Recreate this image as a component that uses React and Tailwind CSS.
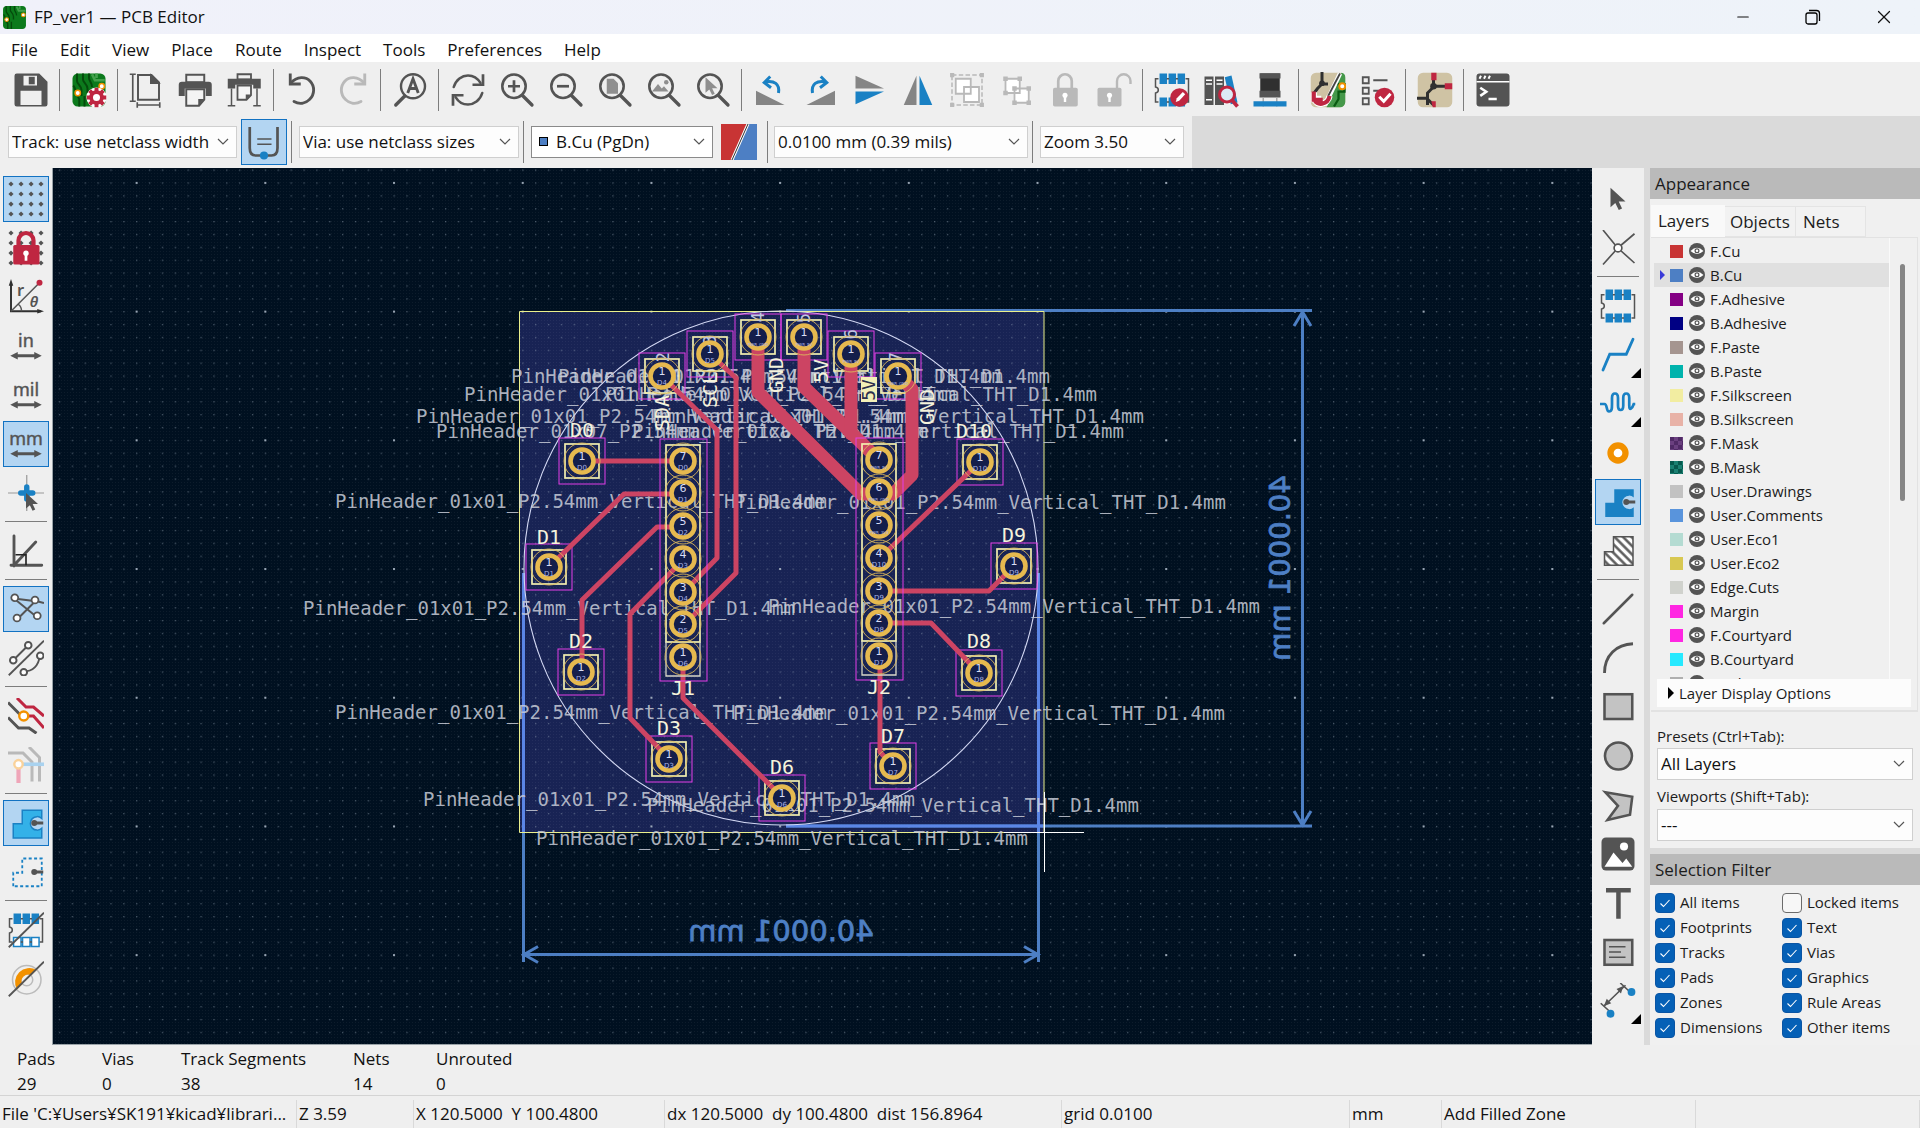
import React from "react";
import { Minus, X } from "lucide-react";

const D = "#545454";
const B = "#1a81c4";
const R = "#bf2641";
const G = "#b9b9b9";
const O = "#f29100";

function Svg({ children, size = 36 }) {
  return (
    <svg width={size} height={size} viewBox="0 0 24 24" fill="none" aria-hidden="true" className="shrink-0">
      {children}
    </svg>
  );
}

/* ---------- shared icon parts ---------- */

function BoardArt() {
  return (
    <>
      <rect x="1" y="1" width="22" height="22" rx="3.500" fill="#0c7a1c" />
      <path d="M4 1v5c0 2 3 3 3 6v4M8 1v4c0 2 3 3 3 6v3M12 1v3c0 2 2 3 2 6M1.500 9c2 2 1.500 6 4 9v5M9 16v7" stroke="#054a0c" strokeWidth="1.300" />
      <path d="M14 1.500l2 4h6.500M17 1v3" stroke="#43a04c" strokeWidth="1.800" />
      <circle cx="4.500" cy="14" r="1.800" fill="#fff" stroke={O} strokeWidth="1" />
      <circle cx="20.500" cy="9.500" r="1.800" fill="#fff" stroke={O} strokeWidth="1" />
    </>
  );
}

function Lens({ children }) {
  return (
    <Svg>
      <circle cx="10" cy="9.500" r="7.800" stroke={D} strokeWidth="1.700" />
      <path d="M15.500 15.500L22 22" stroke={D} strokeWidth="2.200" strokeLinecap="round" />
      {children}
    </Svg>
  );
}

function Chip({ filled = true }) {
  return (
    <>
      <path d="M3 4.500H1v5.500c2.500.5 2.500 3.500 0 4v6H3M21 4.500h2v15.500H21" stroke={D} strokeWidth="1" />
      {[4, 10, 16].map((x) => (
        <g key={x}>
          <rect x={x - 0.3} y="1" width="5" height="7" fill={B} />
          <rect x={x - 0.3} y="17" width="5" height="6" fill={filled ? B : "#fff"} stroke={filled ? "none" : B} />
        </g>
      ))}
      <path d="M8.500 4.500h1.500M14.500 4.500H16M8.500 20h1.500M14.500 20H16" stroke={D} />
    </>
  );
}

function ZoneShape({ fill = B, stroke = "none" }) {
  return (
    <>
      <path d="M3.500 22V12.500H9.500V3.500H22.500v5.500a4.500 4.500 0 1 0 0 6.500V22z" fill={fill} stroke={stroke} />
      <circle cx="17.500" cy="12" r="2" fill={D} />
      <path d="M18 12h5.500" stroke={D} strokeWidth="2" />
    </>
  );
}

function Unit({ label }) {
  return (
    <Svg>
      <text x="12" y="12.500" textAnchor="middle" fontFamily="Noto Sans" fontSize="12" fill={D} stroke={D} strokeWidth="0.300">
        {label}
      </text>
      <path d="M4 18.500h16" stroke={D} strokeWidth="2" />
      <path d="M1.500 18.500l5-2.500v5zM22.500 18.500l-5-2.500v5z" fill={D} />
    </Svg>
  );
}

const CURSOR = "M0 0v13l3.200-2.800 2.300 4.600 2.200-1-2.200-4.600H10z";

/* ---------- top toolbar ---------- */

const top = [
  ["Save", <Svg><path d="M2.500 1h15L23 6.500v15a1.500 1.500 0 0 1-1.500 1.500h-19A1.500 1.500 0 0 1 1 21.500v-19A1.500 1.500 0 0 1 2.500 1z" fill={D} /><path d="M7 2.500h9v6.500H7z" fill="#efefef" /><path d="M10.500 3.200h4v5h-4z" fill={D} /><path d="M5 12.500h14V22H5z" fill="#efefef" /></Svg>],
  null,
  ["Board setup", <Svg><BoardArt /><g transform="translate(17 17)"><circle r="4" stroke="#fff" strokeWidth="5.500" /><path d="M0-6.500v13M-6.500 0h13M-4.600-4.600l9.200 9.200M4.600-4.600l-9.200 9.200" stroke={R} strokeWidth="2.600" /><circle r="3.600" fill="#fff" stroke={R} strokeWidth="2.500" /><circle r="1.200" fill="#fff" /></g></Svg>],
  null,
  ["Page settings", <Svg><path d="M6 2h9l5 5v11.500H6z" stroke={D} strokeWidth="1.300" /><path d="M14.500 2v5.500H20z" fill={D} stroke={D} /><path d="M2.500 1.500v18M.5 1.500h4M.5 19.500h4M5.500 22h15M5.500 20.200v3.600M20.500 20.200v3.600" stroke={D} strokeWidth="1.100" /></Svg>],
  ["Print", <Svg><path d="M5.500 1.800h12v5H5.500z" stroke={D} strokeWidth="1.300" /><path d="M2.500 6.500h18a2 2 0 0 1 2 2V16h-4v-5H4.500v5H.5V8.500a2 2 0 0 1 2-2z" fill={D} /><path d="M5.500 11.500h12v7l-3.500 4H5.500z" stroke={D} strokeWidth="1.300" fill="#f4f4f4" /><path d="M17.500 18l-4 4.500V18z" fill={D} /></Svg>],
  ["Plot", <Svg><path d="M7 1.500h9V5H7z" stroke={D} strokeWidth="1.200" /><path d="M.5 4.500h22v6.500h-5V8.500H5.500V11h-5z" fill={D} /><path d="M7 9h9v6.500l-3 3H7z" stroke={D} strokeWidth="1.200" fill="#f4f4f4" /><path d="M16 15l-3.500 3.500V15z" fill={D} /><path d="M3 11v11.500M.5 22.500h5M20 11v11.500M17.500 22.500h5" stroke={D} strokeWidth="1" /></Svg>],
  null,
  ["Undo", <Svg><path d="M3.500 1v7h7" stroke={D} strokeWidth="1.900" /><path d="M3.800 7.500C8 2.500 14 3 16.800 6.200c3.200 3.500 3 8.600-.3 12-3 3-7 3.500-10.500 1.500" stroke={D} strokeWidth="1.900" strokeLinecap="round" /></Svg>],
  ["Redo", <Svg><path d="M20.500 1v7h-7" stroke={G} strokeWidth="1.900" /><path d="M20.200 7.500C16 2.500 10 3 7.200 6.200c-3.200 3.500-3 8.600.3 12 3 3 7 3.500 10.500 1.500" stroke={G} strokeWidth="1.900" strokeLinecap="round" /></Svg>],
  null,
  ["Find", <Svg><circle cx="14" cy="9.500" r="8" stroke={D} strokeWidth="1.600" /><path d="M8.500 16L2.500 22" stroke={D} strokeWidth="2.200" strokeLinecap="round" /><path d="M10.500 14l3.500-9.500L17.500 14M11.500 11h5" stroke={D} strokeWidth="1.900" /></Svg>],
  null,
  ["Refresh", <Svg><path d="M2.500 10C4 5 8 2.300 12 2.300c3.500 0 6.500 2 8.300 5M21.500 14c-1.500 5-5.500 7.700-9.500 7.700-3.500 0-6.500-2-8.300-5" stroke={D} strokeWidth="1.700" strokeLinecap="round" /><path d="M22 1.500V8.500H15M2 22.500V15.500H9" stroke={D} strokeWidth="1.800" /></Svg>],
  ["Zoom in", <Lens><path d="M10 5.500v8M6 9.500h8" stroke={D} strokeWidth="1.800" /></Lens>],
  ["Zoom out", <Lens><path d="M6 9.500h8" stroke={D} strokeWidth="1.800" /></Lens>],
  ["Zoom to fit", <Lens><path d="M6.500 4.500h4.500l3 3v7H6.500z" fill="#8f8f8f" /></Lens>],
  ["Zoom to objects", <Lens><path d="M4 13l4-5 2.500 3 1.500-1.500 3 3.500z" fill="#8f8f8f" /><circle cx="13.500" cy="6.800" r="1.500" fill="#8f8f8f" /></Lens>],
  ["Zoom to selection", <Lens><path transform="translate(7 3.500) scale(.8)" d={CURSOR} fill="#8f8f8f" /></Lens>],
  null,
  ["Rotate counterclockwise", <Svg><path d="M2 12.500V22h19z" fill="#858585" /><path d="M17 14c1-6-3-8.500-8.500-7.500" stroke={B} strokeWidth="2" /><path d="M11.500 3L7.500 7l4.500 3.500" stroke={B} strokeWidth="2" /></Svg>],
  ["Rotate clockwise", <Svg><path d="M22 12.500V22H3z" fill="#858585" /><path d="M7 14C6 8 10 5.500 15.500 6.500" stroke={B} strokeWidth="2" /><path d="M12.500 3l4 4-4.500 3.500" stroke={B} strokeWidth="2" /></Svg>],
  ["Flip vertically", <Svg><path d="M3 2.500v8.500h19z" fill="#858585" /><path d="M3 21.500V13h19z" fill={B} /></Svg>],
  ["Mirror horizontally", <Svg><path d="M2.500 22H11V2.500z" fill="#858585" /><path d="M21.500 22H13V2.500z" fill={B} /></Svg>],
  ["Group", <Svg><path d="M2 2h20v20H2z" stroke={G} strokeDasharray="3 1.500" /><path d="M4.500 4.500h10v10h-10zM10 10h10v10H10z" fill="#fff" stroke={G} strokeWidth="1.200" /><path d="M.7.700h2.800v2.800H.7zM20.500.7h2.800v2.800h-2.800zM.7 20.500h2.800v2.800H.7zM20.500 20.500h2.800v2.800h-2.800z" fill={G} /></Svg>],
  ["Ungroup", <Svg><path d="M5 4.500h9.500v9.500H5zM11 11h9.500v9.500H11z" fill="#fff" stroke={G} strokeWidth="1.200" /><path d="M3.500 3h3v3h-3zM13 3h3v3h-3zM3.500 12.500h3v3h-3zM19 9.500h3v3h-3zM9.500 9.500h3v3h-3zM9.500 19h3v3h-3zM19 19h3v3h-3z" fill={G} /></Svg>],
  ["Lock", <Svg><path d="M7.500 11V6a4.500 4.500 0 0 1 9 0v5" stroke={G} strokeWidth="1.800" /><rect x="4" y="10.500" width="16.500" height="12.500" rx="1.200" fill={G} /><circle cx="12" cy="15.500" r="1.700" fill="#fff" /><path d="M12 16v4" stroke="#fff" strokeWidth="1.600" /></Svg>],
  ["Unlock", <Svg><path d="M14 11V6a4.500 4.500 0 0 1 9 0v2" stroke={G} strokeWidth="1.600" /><rect x="1" y="10.500" width="16" height="12.500" rx="1.200" fill={G} /><circle cx="9" cy="15.500" r="1.700" fill="#fff" /><path d="M9 16v4" stroke="#fff" strokeWidth="1.600" /></Svg>],
  null,
  ["Footprint editor", <Svg><Chip /><circle cx="17" cy="17" r="6.200" fill={R} /><path d="M14.500 20l.7-2.500 4-4.200 1.600 1.600-4 4.200z" fill="#fff" /></Svg>],
  ["Footprint library browser", <Svg><path d="M1 3h6v19H1zM8 3h6v19H8z" fill={D} /><path d="M14.500 3.500l4.500-1.200 4 18-4.500 1.200z" fill={B} /><path d="M2 5.500h4M2 8h4M2 18.500h4M9 5.500h4M9 8h4" stroke="#fff" strokeWidth=".9" /><circle cx="16" cy="15" r="5" fill="#dcebf5" stroke={R} strokeWidth="2" /><path d="M19.500 19l3.500 4" stroke={R} strokeWidth="2.500" /></Svg>],
  ["3D viewer", <Svg><path d="M5.500 1h13v12h-13z" fill="#303030" /><path d="M5 .8h14v3.500H5zM5 12.500h14v4.500H5z" fill="#555" /><path d="M7.500 17v6M16.500 17v6" stroke="#aaa" /><path d="M1 19.500h22V23H1z" fill={B} /></Svg>],
  null,
  ["Update PCB from schematic", <Svg><rect x=".5" y=".5" width="23" height="23" rx="3.500" fill="#cfc3a4" /><path d="M21 .5a3 3 0 0 1 2.500 3V20a3.500 3.500 0 0 1-3.500 3.500h-9z" fill="#45984a" /><path d="M17 8h6v5h-4v5l-3 5" stroke="#0a5a12" strokeWidth="1.500" /><path d="M8 0v8l-3 3-3 4M8 8h4" stroke="#303030" strokeWidth="2" /><circle cx="8" cy="7.500" r="1.900" fill="#303030" /><path d="M20 1L10 22" stroke="#fff" strokeWidth="3" /><path d="M20 1L10 20" stroke="#444" strokeWidth="1.200" /><circle cx="21.500" cy="9.500" r="2" fill="#fff" stroke={O} strokeWidth="1.300" /><path d="M2.500 13.500v4.500h5M3 18c1 5 9 4 10-2" stroke="#fff" strokeWidth="4.200" /><path d="M2.500 13v5.500h6M3 18c1 5 9 4 10-2" stroke={R} strokeWidth="2.800" /></Svg>],
  ["Design rules checker", <Svg><path d="M2.500 3.500h4v4h-4zM2.500 10.500h4v4h-4zM2.500 17.500h4v4h-4zM9.500 5.500H19M9.500 12.500H14" stroke={D} strokeWidth="1.200" /><circle cx="17" cy="17" r="6.500" fill={R} /><path d="M13.500 16.500l3 3 4.500-5" stroke="#fff" strokeWidth="2" /></Svg>],
  null,
  ["Switch to schematic", <Svg><rect x=".5" y=".5" width="23" height="23" rx="3.500" fill="#cfc3a4" /><path d="M11 4v6l-4 4v8M0 17.500h7M11 9.500h8M7 18l4 4" stroke="#303030" strokeWidth="2" /><circle cx="11" cy="9.500" r="2.200" fill="#303030" /><path d="M9.500.5h3.500v5H9.500zM18.500 7.500h5v4h-5zM9.500 19.500h3v4h-2z" fill={R} /></Svg>],
  null,
  ["Scripting console", <Svg><rect x="1" y="1" width="22" height="22" rx="2" fill={D} /><path d="M1 6.500h22" stroke="#fff" strokeWidth="1" /><path d="M3 4.500l1-2M6 4.500l1-2M9 4.500l1-2" stroke="#fff" strokeWidth="1.300" /><path d="M3.500 10.500l4 2.700-4 2.700M9 18h5.500" stroke="#fff" strokeWidth="1.700" /></Svg>],
];

/* ---------- side toolbars ---------- */

const dots = [];
[2, 8.7, 15.4, 22].forEach((x) => [2, 8.7, 15.4, 22].forEach((y) => dots.push([x, y])));
const Dot = ({ x, y }) => <path d={`M${x - 1.7} ${y}l1.700-1.700 1.700 1.700-1.700 1.700z`} fill={D} />;

const left = [
  ["Show grid", <Svg>{dots.map(([x, y]) => <Dot key={x + "-" + y} x={x} y={y} />)}</Svg>, true],
  ["Grid overrides", <Svg>{dots.map(([x, y]) => <Dot key={x + "-" + y} x={x} y={y} />)}<path d="M7 12V7a5 5 0 0 1 10 0v5" stroke={R} strokeWidth="2.800" /><rect x="3.500" y="10" width="17.500" height="13" rx="1" fill={R} /><circle cx="12" cy="15.500" r="1.800" fill="#fff" /><path d="M12 16v4.500" stroke="#fff" strokeWidth="1.800" /></Svg>],
  ["Polar coordinates", <Svg><path d="M2 3v18.500h20" stroke="#303030" strokeWidth="1.300" /><path d="M2 0L.5 4.500h3zM24 21.500L19.500 20v3z" fill="#303030" /><path d="M2 21.500L20.500 3M7 17c1.500 1 2 2.500 2 4.500" stroke={D} /><circle cx="21" cy="2.500" r="2" fill={R} /><text x="6" y="11" fontFamily="Noto Sans" fontSize="11" fontWeight="600" fill={D}>r</text><text x="14.500" y="18.500" fontFamily="Noto Sans" fontSize="10" fontStyle="italic" fontWeight="600" fill={D}>θ</text></Svg>],
  ["Inches", <Unit label="in" />],
  ["Mils", <Unit label="mil" />],
  ["Millimeters", <Unit label="mm" />, true],
  ["Full-window crosshair", <Svg><path d="M0 12h24M12.500 0v24" stroke="#999" strokeWidth=".8" /><path d="M12.500 8v8M8.500 12h8" stroke={B} strokeWidth="3.600" strokeLinecap="round" /><path transform="translate(12 12) scale(.8)" d={CURSOR} fill={D} /></Svg>],
  null,
  ["Limit to 45 degrees", <Svg><path d="M4 2v20M2 21.500h20.500M4 21.500L18.500 6" stroke={D} strokeWidth="1.900" strokeLinecap="round" /><path d="M5 14.500h7v7" stroke="#222" strokeWidth="1.100" /></Svg>],
  null,
  ["Show ratsnest", <Svg><path d="M4 5L20 18M20 5L6 19M4 5l16 2 4 1" stroke={D} strokeWidth="1.300" /><g fill="#fff" stroke={D} strokeWidth="1.200"><circle cx="4.500" cy="4.500" r="2.300" /><circle cx="18" cy="6" r="2.300" /><circle cx="6" cy="18" r="2.300" /><circle cx="19.500" cy="16.500" r="2.300" /></g></Svg>, true],
  ["Curved ratsnest", <Svg><path d="M24 .5L.5 23.500" stroke={D} strokeWidth="1.200" /><path d="M3.500 13.500l10-10M10.500 21c6 0 10-4 10.500-10" stroke={D} strokeWidth="1.300" /><g fill="#fff" stroke={D} strokeWidth="1.300"><circle cx="3.500" cy="13.500" r="2.200" /><circle cx="13.500" cy="3.500" r="2.200" /><circle cx="21.500" cy="10.500" r="2.200" /><circle cx="10.500" cy="21.500" r="2.200" /></g></Svg>],
  null,
  ["Net colors", <Svg><path d="M0 3l8 8M0 13l7 7h7l5 3.500" stroke={D} strokeWidth="2" /><path d="M6 0l6 6h5l7 6M13 12h4l7 8" stroke={R} strokeWidth="2" /><circle cx="10.500" cy="12" r="3" fill="#fff" stroke={O} strokeWidth="1.600" /></Svg>],
  ["High contrast", <Svg><path d="M0 4h10l6 6v13M14 0l7 7v16" stroke={G} strokeWidth="2" /><path d="M10 11.500h14" stroke="#a9d2ef" strokeWidth="2.400" /><path d="M7 14v10" stroke="#efa5b8" strokeWidth="2.800" /><circle cx="7" cy="11.500" r="2.800" fill="#fff" stroke="#fad29a" strokeWidth="1.600" /></Svg>],
  null,
  ["Draw zone fills", <Svg><ZoneShape fill="#33b1e8" stroke={B} /></Svg>, true],
  ["Draw zone outlines", <Svg><path d="M3.500 21.500V12.500H9.500V3H22.500V21.500z" stroke={B} strokeWidth="1.200" strokeDasharray="2 1.600" /><circle cx="17.500" cy="12" r="2" fill={D} /><path d="M18 12h5.500" stroke={D} strokeWidth="2" /></Svg>],
  null,
  ["Sketch footprints", <Svg><Chip filled={false} /><path d="M24 .5L.5 23.500" stroke={D} strokeWidth="1.200" /></Svg>],
  ["Sketch pads", <Svg><circle cx="12.500" cy="12.500" r="9.500" stroke="#bbb" /><circle cx="12.500" cy="12.500" r="4" stroke="#bbb" /><path d="M6 19A9.500 9.500 0 0 1 19 6l-3.500 3.500a4.500 4.500 0 0 0-6 6z" fill={O} /><path d="M24 .5L.5 23.500" stroke={D} strokeWidth="1.200" /></Svg>],
];

const right = [
  ["Select", <Svg><path transform="translate(7 4.500)" d={CURSOR} fill={D} /></Svg>],
  ["Local ratsnest", <Svg><path d="M2 0l9 11M23 2.500L13 11M2 23l9-10M23 22l-10-9" stroke={D} strokeWidth="1.100" /><circle cx="12" cy="12" r="2.600" stroke={D} strokeWidth="1.100" fill="#fff" /></Svg>],
  null,
  ["Place footprint", <Svg><Chip /></Svg>],
  ["Route track", <Svg><path d="M2 22L6.500 11.500H17.500L22 1.500" stroke={B} strokeWidth="1.900" strokeLinecap="round" /></Svg>, false, true],
  ["Tune length", <Svg><path d="M0 12h3c2 0 1 5 3 5s2-2 2-5V8c0-4 4-4 4 0v5c0 4 3.500 4 3.500 0V8c0-4 4-4 4 0v5c0 4 2 2 3-1h1" stroke={B} strokeWidth="1.800" /></Svg>, false, true],
  ["Add via", <Svg><circle cx="12" cy="12" r="5" stroke={O} strokeWidth="4.200" fill="#fff" /></Svg>],
  ["Add filled zone", <Svg><ZoneShape /></Svg>, true],
  ["Add rule area", <Svg><defs><pattern id="hatch" width="4" height="4" patternUnits="userSpaceOnUse" patternTransform="rotate(-45)"><path d="M1 0v4" stroke={D} strokeWidth="1.600" /></pattern></defs><path d="M3 21.500V12.500H9V2.500H22V21.500z" fill="#fff" /><path d="M3 21.500V12.500H9V2.500H22V21.500z" fill="url(#hatch)" stroke={D} /></Svg>],
  null,
  ["Draw line", <Svg><path d="M2.500 21.500l19-19" stroke={D} strokeWidth="1.700" strokeLinecap="round" /></Svg>],
  ["Draw arc", <Svg><path d="M3 22C3 10 11 3 22 2.500" stroke={D} strokeWidth="1.900" /></Svg>],
  ["Draw rectangle", <Svg><rect x="3" y="3.500" width="18.500" height="16.500" fill="#c3c3c3" stroke={D} strokeWidth="1.700" /></Svg>],
  ["Draw circle", <Svg><circle cx="12.300" cy="12" r="9" fill="#c3c3c3" stroke={D} strokeWidth="1.700" /></Svg>],
  ["Draw polygon", <Svg><path d="M3.500 3.500l18 3-1.500 12-15 3.500 7-9.500z" fill="#c3c3c3" stroke={D} strokeWidth="1.700" /></Svg>],
  ["Add image", <Svg><rect x="1" y="1" width="22" height="22" rx="3" fill={D} /><circle cx="16" cy="7" r="2.700" fill="#fff" /><path d="M3 20.500l6-9.500 6 7 2.500-3 4 5.500z" fill="#fff" /></Svg>],
  ["Add text", <Svg><path d="M4 3.500h16.500M12.300 3.500V22.500" stroke={D} strokeWidth="3" /></Svg>],
  ["Add text box", <Svg><rect x="3" y="4" width="18.500" height="16.500" fill="#c3c3c3" stroke={D} strokeWidth="1.700" /><path d="M6 8.500h11M6 12h8M6 15.500h11" stroke={D} strokeWidth="1.100" /></Svg>],
  ["Add dimension", <Svg><path d="M3 15L17 1.500M13.500 0l6 5.500M.5 13.500l6 5.500" stroke={D} strokeWidth="1.100" /><path d="M2.500 15.500l2-5 3 3zM15.500 2l-1.500 5-3-3z" fill={D} /><circle cx="21" cy="6" r="2.600" fill={B} /><circle cx="7" cy="20.500" r="2.600" fill={B} /></Svg>, false, true],
];

function SideBar({ items, label }) {
  return (
    <div role="toolbar" aria-label={label} className="flex shrink-0 flex-col items-center bg-[#efefef] px-[3px] pt-[6px]">
      {items.map((it, i) =>
        it ? (
          <div key={it[0]} className="flex h-[49px] items-center">
            <button
              aria-label={it[0]}
              className={
                it[2]
                  ? "relative flex h-[46px] w-[46px] items-center justify-center border border-[#1272c2] bg-[#b3d5f2]"
                  : "relative flex h-[46px] w-[46px] items-center justify-center"
              }
            >
              {it[1]}
              {it[3] && (
                <svg width="10" height="10" viewBox="0 0 10 10" className="absolute right-0 bottom-0" aria-hidden="true">
                  <path d="M10 0v10H0z" fill="#000" />
                </svg>
              )}
            </button>
          </div>
        ) : (
          <div key={i} className="flex h-[9px] w-[42px] items-center">
            <div className="h-px w-full bg-[#7d7d7d]" />
          </div>
        )
      )}
    </div>
  );
}

/* ---------- drop-downs ---------- */

function Chevron() {
  return (
    <svg width="12" height="8" viewBox="0 0 12 8" fill="none" aria-hidden="true" className="pointer-events-none absolute top-3 right-2">
      <path d="M1 1l5 5 5-5" stroke="#555" strokeWidth="1.200" />
    </svg>
  );
}

function Drop({ label, value, width, id, dark }) {
  return (
    <div className={"relative shrink-0 " + width}>
      <select
        id={id}
        aria-label={label}
        className={
          dark
            ? "h-8 w-full appearance-none border border-[#8a8a8a] bg-white pl-6 text-[17px] text-[#111] outline-none"
            : "h-8 w-full appearance-none border border-[#cfcfcf] bg-[#fdfdfd] pl-[3px] text-[17px] text-[#111] outline-none"
        }
      >
        <option>{value}</option>
      </select>
      {dark && <span className="pointer-events-none absolute top-[11px] left-2 h-[9px] w-[9px] border border-black bg-[#4d7fc4]" />}
      <Chevron />
    </div>
  );
}

const Sep = () => (
  <div className="flex w-[9px] shrink-0 justify-center">
    <div className="h-[42px] w-px bg-[#7d7d7d]" />
  </div>
);

/* ---------- board drawing ---------- */

const FAB = "PinHeader_01x01_P2.54mm_Vertical_THT_D1.4mm";
const FAB7 = "PinHeader_01x07_P2.54mm_Vertical_THT_D1.4mm";
const fabTexts = [
  [757, 383], [804, 383], [710, 401], [851, 401], [662, 423], [898, 423],
  [581, 508], [980, 509], [549, 615], [1014, 613], [581, 719], [979, 720],
  [669, 806], [893, 812], [782, 845],
];
const pads = [
  [582, 461, "D0"], [662, 376, "D4"], [710, 354, "D5"], [758, 337, "PWR_GND"], [804, 337, "PWR_5V"],
  [851, 354, "PWR_5V"], [898, 376, "PWR_GND"], [549, 567, "D1"], [980, 462, "D10"], [1014, 566, "D9"],
  [979, 673, "D8"], [893, 766, "D7"], [782, 798, "D6"], [669, 759, "D3"], [581, 672, "D2"],
];
const j1 = ["D6", "D5", "D4", "D3", "D2", "D1", "D0"];
const j2 = ["D7", "D8", "D9", "D10", "PWR_3V3", "PWR_GND", "PWR_5V"];
const tracks = [
  "M582 461H683", "M683 494H624L549 567", "M683 527H657L582 600V672", "M683 560L630 614V718L669 759",
  "M662 376L717 430V558L683 593", "M710 354L736 378V573L683 626", "M683 657V698L782 797",
  "M980 462L879 559", "M879 591H989L1014 566", "M879 623H931L979 673", "M880 657V752L893 766",
];
const wide = ["M758 337V392L861 494H879", "M804 337V387L879 460", "M851 354V434", "M898 376L912 389V475L893 494H879"];
const silk = [
  [582, 437, "D0"], [549, 544, "D1"], [581, 648, "D2"], [669, 735, "D3"], [782, 774, "D6"], [893, 743, "D7"],
  [979, 648, "D8"], [1014, 542, "D9"], [974, 438, "D10"], [683, 695, "J1"], [879, 694, "J2"],
];
const silkUp = [[669, 413, "SDA"], [717, 390, "SCL"], [783, 375, "GND"], [828, 371, "5V"], [934, 407, "GND"]];
const refUp = [[669, 357, "2"], [716, 340, "3"], [764, 317, "4"], [810, 318, "5"], [857, 334, "6"], [902, 357, "7"]];

function Pad({ x, y, n, net }) {
  return (
    <g transform={`translate(${x} ${y})`}>
      <circle r="18" stroke="#dcb95a" strokeWidth="0.900" />
      <circle r="11.500" fill="#141e4b" stroke="#e6b94f" strokeWidth="4.600" />
      <text y="-1" textAnchor="middle" fontSize="11" fill="#d9ddf5">{n}</text>
      <text y="9" textAnchor="middle" fontSize={net.length > 3 ? 4 : 7} fill="#aab3e6">{net}</text>
    </g>
  );
}

function Column({ x, top: y, nets }) {
  return (
    <g>
      <rect x={x - 23} y={y - 22} width="47" height="242" stroke="#e33ee8" />
      <rect x={x - 17} y={y - 16} width="34" height="197" stroke="#f3efb0" strokeWidth="1.700" />
      <path d={`M${x - 17} ${y + 181}v34h34v-34`} stroke="#d8d8c8" strokeWidth="1.300" />
      {nets.map((net, i) => (
        <Pad key={net + i} x={x} y={y + 196 - Math.round(i * 32.7)} n={i + 1} net={net} />
      ))}
    </g>
  );
}

function Dim({ children, transform }) {
  return (
    <text transform={transform} textAnchor="middle" fontSize="29" fill="#4d7fc4" stroke="#4d7fc4" strokeWidth="0.800">
      {children}
    </text>
  );
}

function Canvas() {
  return (
    <svg viewBox="53 168 1539 876" preserveAspectRatio="xMidYMid slice" fill="none" fontFamily="DejaVu Sans" role="img" aria-label="Board layout" className="block h-full w-full bg-[#001020]">
      <defs>
        <pattern id="fine" x="394" y="569" width="3" height="3" patternUnits="userSpaceOnUse">
          <rect width="1" height="1" fill="#fff" fillOpacity="0.050" />
        </pattern>
        <pattern id="minor" x="393.500" y="568.500" width="12.870" height="12.870" patternUnits="userSpaceOnUse">
          <rect width="1.300" height="1.300" fill="#9fb0c0" fillOpacity="0.450" />
        </pattern>
        <pattern id="major" x="393" y="568" width="128.700" height="128.700" patternUnits="userSpaceOnUse">
          <rect width="2" height="2" fill="#aab6c4" fillOpacity="0.850" />
        </pattern>
      </defs>
      <path d="M519.500 311.500h524.500v521H519.500z" fill="#182354" />
      <path d="M53 168h1539v876H53z" fill="url(#fine)" />
      <path d="M53 168h1539v876H53z" fill="url(#minor)" />
      <path d="M53 168h1539v876H53z" fill="url(#major)" />

      <g stroke="#4d7fc4" strokeWidth="3">
        <path d="M786 310.500h526M786 826h526M1302.500 311v514M1294 326l8.500-14 8.500 14M1294 811l8.500 14 8.500-14" />
        <path d="M523.500 573v389M1038.500 573v389M524 954.500h514M538 946.500l-14 8 14 8M1024 946.500l14 8-14 8" />
      </g>
      <path d="M523.500 573v259M1038.500 573v259M786 826h258" stroke="#5b86e6" strokeWidth="3" />
      <Dim transform="translate(781 941) scale(-1 1)">40.0001 mm</Dim>
      <Dim transform="translate(1290 568) rotate(-90) scale(-1 1)">40.0001 mm</Dim>

      <path d="M519.500 311.500h524.500v521H519.500z" stroke="#eaf08c" />
      <circle cx="781" cy="568" r="257" stroke="#d5daf5" strokeWidth="1.100" />

      <g fontFamily="DejaVu Sans Mono" fontSize="19" fill="#c9cdd8" fillOpacity="0.850" textAnchor="middle">
        {fabTexts.map(([x, y]) => (
          <text key={x + "-" + y} x={x} y={y}>{FAB}</text>
        ))}
        <text x="682" y="438">{FAB7}</text>
        <text x="878" y="438">{FAB7}</text>
      </g>

      {pads.map(([x, y]) => (
        <g key={x + "-" + y}>
          <rect x={x - 23} y={y - 23} width="46" height="46" stroke="#e33ee8" />
          <rect x={x - 17} y={y - 17} width="34" height="34" stroke="#f3efb0" strokeWidth="1.700" />
        </g>
      ))}
      <g fontFamily="DejaVu Sans Mono" fontSize="17" fill="#c2c6e0" textAnchor="middle">
        {refUp.map(([x, y, t]) => (
          <text key={t} transform={`translate(${x} ${y}) rotate(-90)`}>{t}</text>
        ))}
      </g>

      <g stroke="#cc4463" strokeWidth="5" strokeLinejoin="round" strokeLinecap="round">
        {tracks.map((d) => <path key={d} d={d} />)}
      </g>
      <g stroke="#cc4463" strokeWidth="13" strokeLinejoin="round" strokeLinecap="round">
        {wide.map((d) => <path key={d} d={d} />)}
      </g>
      <Column x={683} top={461} nets={j1} />
      <Column x={879} top={460} nets={j2} />
      {pads.map(([x, y, net]) => <Pad key={x + "-" + y} x={x} y={y} n={1} net={net} />)}

      <g fontFamily="DejaVu Sans Mono" fontSize="20" fill="#f5f3dc" textAnchor="middle">
        {silk.map(([x, y, t]) => <text key={t} x={x} y={y}>{t}</text>)}
        {silkUp.map(([x, y, t]) => (
          <text key={t + x} transform={`translate(${x} ${y}) rotate(-90)`}>{t}</text>
        ))}
        <path d="M861 377h16v25h-16z" fill="#f3f0b8" />
        <text transform="translate(875 390) rotate(-90)" fontSize="18" fill="#2c2f4e">5V</text>
      </g>
      <path d="M1004 832.500h80M1044.500 792v80" stroke="#fff" />
    </svg>
  );
}

/* ---------- appearance panel ---------- */

const layers = [
  ["F.Cu", "bg-[#c83434]"], ["B.Cu", "bg-[#4d7fc4]"], ["F.Adhesive", "bg-[#840084]"], ["B.Adhesive", "bg-[#000084]"],
  ["F.Paste", "bg-[#a59590]"], ["B.Paste", "bg-[#00b3ad]"], ["F.Silkscreen", "bg-[#f2eda1]"], ["B.Silkscreen", "bg-[#e8b2a7]"],
  ["F.Mask", "bg-[conic-gradient(#6b4080_25%,#502a66_0_50%,#6b4080_0_75%,#502a66_0)] bg-[length:8px_8px]"],
  ["B.Mask", "bg-[conic-gradient(#1a8072_25%,#07594e_0_50%,#1a8072_0_75%,#07594e_0)] bg-[length:8px_8px]"],
  ["User.Drawings", "bg-[#c2c2c2]"], ["User.Comments", "bg-[#5994dc]"], ["User.Eco1", "bg-[#b4dbd2]"], ["User.Eco2", "bg-[#d8c852]"],
  ["Edge.Cuts", "bg-[#d0d2cd]"], ["Margin", "bg-[#ff26e2]"], ["F.Courtyard", "bg-[#ff26e2]"], ["B.Courtyard", "bg-[#26e9ff]"],
  ["F.Fab", "bg-[#afafaf]"],
];

function Eye() {
  return (
    <svg width="16" height="16" viewBox="0 0 16 16" aria-hidden="true">
      <circle cx="8" cy="8" r="8" fill={D} />
      <path d="M1.500 8Q8 1.500 14.500 8 8 14 1.500 8z" fill="#fff" />
      <circle cx="8" cy="7.800" r="1.900" fill="#fff" stroke={D} strokeWidth="1.200" />
    </svg>
  );
}

const filters = [
  ["All items", true], ["Locked items", false], ["Footprints", true], ["Text", true], ["Tracks", true], ["Vias", true],
  ["Pads", true], ["Graphics", true], ["Zones", true], ["Rule Areas", true], ["Dimensions", true], ["Other items", true],
];

function Panel() {
  return (
    <aside className="flex w-[276px] shrink-0 flex-col border-l-6 border-[#dadada] bg-[#f0f0f0] text-[15px] text-[#1c1c1c]">
      <h2 className="flex h-[31px] shrink-0 items-center bg-[#bababa] pl-[5px] text-[17px]">Appearance</h2>
      <div role="tablist" className="mt-[6px] flex h-8 shrink-0 items-end pl-px text-[17px]">
        <button role="tab" aria-selected="true" className="h-8 w-[74px] bg-[#f9f9f9] pl-[7px] text-left">Layers</button>
        <button role="tab" aria-selected="false" className="h-[31px] w-[71px] border border-l-0 border-[#e4e4e4] bg-[#f2f2f2] pl-[5px] text-left">Objects</button>
        <button role="tab" aria-selected="false" className="h-[31px] w-[70px] border border-l-0 border-[#e4e4e4] bg-[#f2f2f2] pl-[7px] text-left">Nets</button>
      </div>
      <div className="mr-[2px] ml-px flex min-h-0 flex-1 flex-col border-t border-r border-b-2 border-[#e2e2e2] px-[3px]">
        <div className="flex min-h-0 flex-1">
          <ul className="min-w-0 flex-1 overflow-hidden border-r border-[#fafafa] pt-px">
            {layers.map(([name, color]) => (
              <li key={name} className={name === "B.Cu" ? "flex h-6 items-center bg-[#e0e0e0]" : "flex h-6 items-center"}>
                <span className="flex w-4 justify-center">
                  {name === "B.Cu" && (
                    <svg width="5" height="10" viewBox="0 0 5 10" aria-hidden="true"><path d="M0 0l5 5-5 5z" fill="#3a3ad8" /></svg>
                  )}
                </span>
                <span className={"h-[13px] w-[13px] " + color} />
                <button aria-label={"Toggle " + name} className="ml-[6px]"><Eye /></button>
                <span className="ml-[5px]">{name}</span>
              </li>
            ))}
          </ul>
          <div className="flex w-6 flex-col items-center pt-[26px]">
            <div className="h-[237px] w-[5px] rounded-full bg-[#868686]" />
          </div>
        </div>
        <button className="mx-[3px] mb-[3px] flex h-7 shrink-0 items-center gap-[5px] bg-[#fcfcfc] pl-[11px] text-left">
          <svg width="6" height="12" viewBox="0 0 6 12" aria-hidden="true"><path d="M0 0l6 6-6 6z" fill="#000" /></svg>
          Layer Display Options
        </button>
      </div>
      <div className="shrink-0 px-[7px] pt-3 pb-[7px]">
        <label htmlFor="presets" className="block h-6 leading-6">Presets (Ctrl+Tab):</label>
        <Drop id="presets" value="All Layers" width="w-full" />
        <label htmlFor="viewports" className="mt-1 block h-[25px] leading-6">Viewports (Shift+Tab):</label>
        <Drop id="viewports" value="---" width="w-full" />
      </div>
      <h2 className="flex h-[37px] shrink-0 items-center border-t-6 border-[#dadada] bg-[#bababa] pl-[5px] text-[17px]">Selection Filter</h2>
      <div className="grid shrink-0 grid-cols-[127px_1fr] pt-[5px] pb-[5px] pl-[5px]">
        {filters.map(([name, on]) => (
          <label key={name} className="relative flex h-[25px] items-center gap-[5px]">
            <input
              type="checkbox"
              defaultChecked={on}
              className="peer h-5 w-5 shrink-0 appearance-none rounded-sm border border-[#6b6b6b] bg-[#f7f7f7] checked:border-[#0a55a4] checked:bg-[#0560b6]"
            />
            <svg width="20" height="20" viewBox="0 0 20 20" fill="none" aria-hidden="true" className="pointer-events-none absolute left-0 opacity-0 peer-checked:opacity-100">
              <path d="M5.500 10.500l3 3 6-6.500" stroke="#fff" strokeWidth="1.100" />
            </svg>
            <span>{name}</span>
          </label>
        ))}
      </div>
    </aside>
  );
}

/* ---------- window ---------- */

const menus = ["File", "Edit", "View", "Place", "Route", "Inspect", "Tools", "Preferences", "Help"];
const stats = [
  ["Pads", "29", "w-[85px]"], ["Vias", "0", "w-[79px]"], ["Track Segments", "38", "w-[172px]"], ["Nets", "14", "w-[83px]"], ["Unrouted", "0", "w-[100px]"],
];
const status = [
  ["File 'C:¥Users¥SK191¥kicad¥librari...", "w-[297px]"], ["Z 3.59", "w-[117px]"], ["X 120.5000  Y 100.4800", "w-[251px]"],
  ["dx 120.5000  dy 100.4800  dist 156.8964", "w-[397px]"], ["grid 0.0100", "w-[288px]"], ["mm", "w-[92px]"], ["Add Filled Zone", "w-[254px]"], ["", "flex-1"],
];

export default function App() {
  return (
    <div className="flex h-screen flex-col overflow-hidden bg-[#efefef] font-['Open_Sans',sans-serif] text-[17px] text-[#111]">
      <header className="flex h-[34px] shrink-0 items-center bg-linear-to-r from-[#f0f1fa] to-[#eef3f9] pl-[2px]">
        <Svg size={25}><BoardArt /></Svg>
        <h1 className="ml-[7px]">FP_ver1 — PCB Editor</h1>
        <div className="ml-auto flex">
          <button aria-label="Minimize" className="flex w-[70px] items-center justify-center"><Minus size={18} strokeWidth={1.5} /></button>
          <button aria-label="Restore" className="flex w-[70px] items-center justify-center">
            <svg width="16" height="16" viewBox="0 0 16 16" fill="none" stroke="#000" strokeWidth="1.300" aria-hidden="true">
              <rect x="1" y="4" width="11" height="11" rx="2" />
              <path d="M4 1.500h7.500a3 3 0 0 1 3 3V12" />
            </svg>
          </button>
          <button aria-label="Close" className="flex w-[72px] items-center justify-center"><X size={22} strokeWidth={1.3} /></button>
        </div>
      </header>
      <nav className="flex h-7 shrink-0 items-center gap-[22px] bg-white pt-[3px] pl-[11px]">
        {menus.map((m) => <button key={m}>{m}</button>)}
      </nav>
      <div role="toolbar" aria-label="Main" className="flex h-[54px] shrink-0 items-center pt-px pl-[6px]">
        {top.map((it, i) =>
          it ? (
            <button key={it[0]} aria-label={it[0]} className="flex w-[49px] shrink-0 justify-center">{it[1]}</button>
          ) : (
            <Sep key={i} />
          )
        )}
      </div>
      <div className="flex h-[52px] shrink-0 bg-[#dadada]">
        <div className="flex items-center bg-[#efefef] pr-2 pl-2">
          <Drop label="Track width" value="Track: use netclass width" width="w-[229px]" />
          <button aria-label="Use existing track width" className="ml-1 flex h-[46px] w-[46px] items-center justify-center border border-[#1272c2] bg-[#b3d5f2]">
            <Svg><path d="M2.500 2v14c0 3.500 1.500 5 4 5h10.500c2.500 0 4-1.500 4-5V2" stroke={D} strokeWidth="1.800" /><path d="M7.500 10h9.500M7.500 13.500h9.500" stroke={D} strokeWidth="1.100" /><circle cx="12" cy="21" r="2.700" fill={B} /></Svg>
          </button>
          <Sep />
          <div className="w-[3px]" />
          <Drop label="Via size" value="Via: use netclass sizes" width="w-[220px]" />
          <Sep />
          <div className="w-[3px]" />
          <Drop label="Active layer" value="B.Cu (PgDn)" width="w-[182px]" dark />
          <button aria-label="Layer pair" className="ml-2">
            <svg width="36" height="36" viewBox="0 0 36 36" aria-hidden="true">
              <path d="M0 0h36v36H0z" fill="#4d7fc4" />
              <path d="M0 0h27L11 36H0z" fill="#c83434" />
              <path d="M27 0L11 36" stroke="#fff" strokeWidth="3" />
              <path d="M27 0L11 36" stroke="#333" strokeWidth="1" />
            </svg>
          </button>
          <div className="w-[6px]" />
          <Sep />
          <div className="w-[2px]" />
          <Drop label="Grid" value="0.0100 mm (0.39 mils)" width="w-[254px]" />
          <Sep />
          <div className="w-[3px]" />
          <Drop label="Zoom" value="Zoom 3.50" width="w-[144px]" />
        </div>
      </div>
      <main className="flex min-h-0 flex-1">
        <SideBar items={left} label="Display options" />
        <div className="min-w-0 flex-1 border-b border-l border-[#9aa3a8]"><Canvas /></div>
        <SideBar items={right} label="Drawing tools" />
        <Panel />
      </main>
      <dl className="flex h-[50px] shrink-0 pt-px pl-[17px] leading-[25px]">
        {stats.map(([k, v, w]) => (
          <div key={k} className={w}>
            <dt>{k}</dt>
            <dd>{v}</dd>
          </div>
        ))}
      </dl>
      <footer className="flex h-[33px] shrink-0 items-stretch border-t border-[#d4d4d4] pt-1">
        {status.map(([t, w], i) => (
          <div key={i} className={"flex items-center overflow-hidden border-r border-[#d9d9d9] pl-[2px] whitespace-pre " + w}>{t}</div>
        ))}
      </footer>
    </div>
  );
}
